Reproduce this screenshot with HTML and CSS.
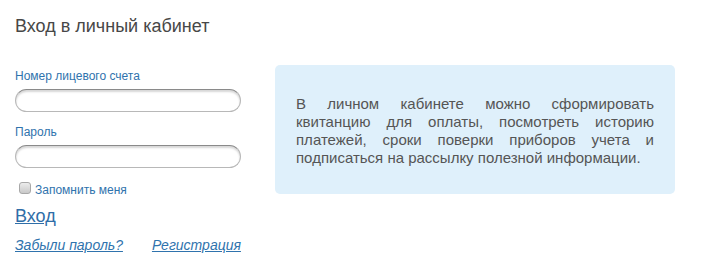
FILE: index.html
```html
<!DOCTYPE html>
<html lang="ru">
<head>
<meta charset="utf-8">
<link rel="stylesheet" href="styles.css">
</head>
<body>
<div class="page">
  <h1 class="title">Вход в личный кабинет</h1>
  <div class="cols">
    <form class="form">
      <label class="label">Номер лицевого счета</label>
      <input class="field" type="text">
      <label class="label">Пароль</label>
      <input class="field" type="password">
      <label class="remember"><span class="check"></span>Запомнить меня</label>
      <a class="login" href="#">Вход</a>
      <div class="links">
        <a class="link" href="#">Забыли пароль?</a>
        <a class="link" href="#">Регистрация</a>
      </div>
    </form>
    <div class="info">
      <p class="info-text">В личном кабинете можно сформировать квитанцию для оплаты, посмотреть историю платежей, сроки поверки приборов учета и подписаться на рассылку полезной информации.</p>
    </div>
  </div>
</div>
</body>
</html>
```
FILE: styles.css
```css
html, body {
  margin: 0;
  padding: 0;
  background: #fff;
}
body {
  font-family: "Liberation Sans", Arial, sans-serif;
  color: #444;
}
.page {
  padding: 15px 15px 0 15px;
}
.title {
  margin: 0;
  font-size: 18px;
  line-height: 22px;
  font-weight: normal;
  color: #474747;
}
.cols {
  display: flex;
  gap: 34px;
  margin-top: 28px;
}
.form {
  width: 226px;
  display: flex;
  flex-direction: column;
  margin: 0;
  padding-top: 4px;
}
.label {
  font-size: 12px;
  line-height: 14px;
  color: #2f73ad;
}
.field {
  box-sizing: border-box;
  width: 226px;
  height: 23px;
  margin: 6px 0 13px 0;
  border: 1px solid #b8b8b8;
  border-top-color: #8a8a8a;
  border-radius: 12px;
  box-shadow: inset 0 2px 2px rgba(0,0,0,0.16);
  background: #fff;
  outline: none;
}
.remember {
  display: flex;
  align-items: flex-start;
  gap: 4px;
  font-size: 12px;
  line-height: 14px;
  color: #2f73ad;
  margin-top: 2px;
  padding-left: 4px;
}
.check {
  box-sizing: border-box;
  width: 12px;
  height: 12px;
  margin-top: -1px;
  border: 1px solid #a8a8a8;
  border-radius: 3px;
  background: linear-gradient(#ececec, #c9c9c9);
}
.login {
  font-size: 18px;
  line-height: 20px;
  color: #2f6ea8;
  text-decoration: underline;
  margin-top: 9px;
  align-self: flex-start;
}
.links {
  display: flex;
  gap: 29px;
  margin-top: 11px;
}
.link {
  font-size: 14px;
  line-height: 16px;
  font-style: italic;
  color: #2f73ad;
  text-decoration: underline;
}
.info {
  box-sizing: border-box;
  width: 400px;
  height: 129px;
  background: #dff0fb;
  border-radius: 5px;
  padding: 30px 21px 0 21px;
}
.info-text {
  margin: 0;
  font-size: 15px;
  line-height: 18px;
  text-align: justify;
  color: #555;
}
```
